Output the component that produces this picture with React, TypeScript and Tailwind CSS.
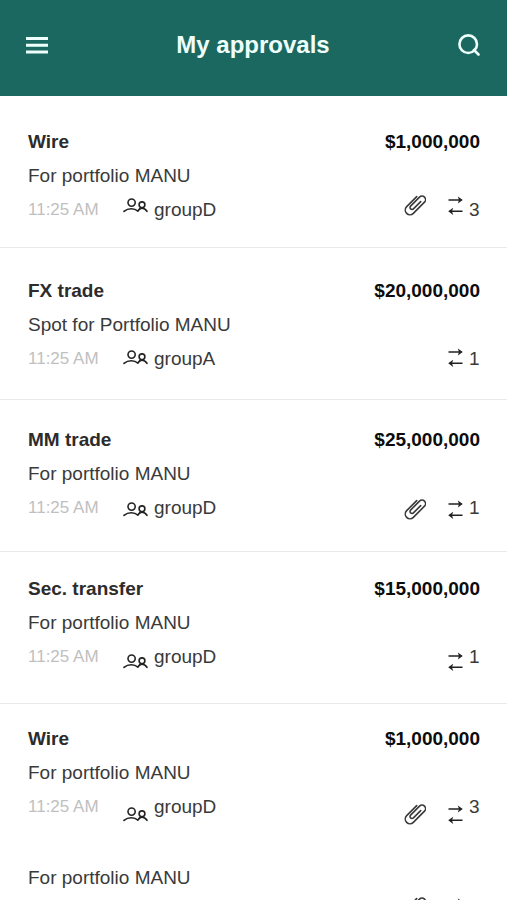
import React from 'react';

interface Approval {
  id: number;
  title?: string;
  amount?: string;
  description: string;
  time?: string;
  group?: string;
  transfers?: number;
  hasAttachment?: boolean;
  rowClass: string;
}

const approvals: Approval[] = [
  {
    id: 1,
    title: 'Wire',
    amount: '$1,000,000',
    description: 'For portfolio MANU',
    time: '11:25 AM',
    group: 'groupD',
    transfers: 3,
    hasAttachment: true,
    rowClass: 'min-h-38 border-b pt-[29px]',
  },
  {
    id: 2,
    title: 'FX trade',
    amount: '$20,000,000',
    description: 'Spot for Portfolio MANU',
    time: '11:25 AM',
    group: 'groupA',
    transfers: 1,
    rowClass: 'min-h-38 border-b pt-[26px]',
  },
  {
    id: 3,
    title: 'MM trade',
    amount: '$25,000,000',
    description: 'For portfolio MANU',
    time: '11:25 AM',
    group: 'groupD',
    transfers: 1,
    hasAttachment: true,
    rowClass: 'min-h-38 border-b pt-[23px]',
  },
  {
    id: 4,
    title: 'Sec. transfer',
    amount: '$15,000,000',
    description: 'For portfolio MANU',
    time: '11:25 AM',
    group: 'groupD',
    transfers: 1,
    rowClass: 'min-h-38 border-b pt-[20px]',
  },
  {
    id: 5,
    title: 'Wire',
    amount: '$1,000,000',
    description: 'For portfolio MANU',
    time: '11:25 AM',
    group: 'groupD',
    transfers: 3,
    hasAttachment: true,
    rowClass: 'min-h-38 pt-[18px]',
  },
  {
    id: 6,
    description: 'For portfolio MANU',
    hasAttachment: true,
    rowClass: 'min-h-[93px] pt-[5px]',
  },
];

const MenuIcon = () => (
  <svg width="22" height="18" viewBox="0 0 22 18" fill="none" stroke="currentColor" strokeWidth="3" aria-hidden="true">
    <path d="M0 2.4h22M0 9.2h22M0 16h22" />
  </svg>
);

const SearchIcon = () => (
  <svg width="22" height="22" viewBox="0 0 22 22" fill="none" stroke="currentColor" strokeWidth="2.6" aria-hidden="true">
    <circle cx="10.2" cy="10.2" r="8.8" />
    <path d="m16 16 4.5 4.5" strokeLinecap="round" />
  </svg>
);

const PeopleIcon = () => (
  <svg width="25" height="21" viewBox="0 0 25 21" fill="none" stroke="currentColor" strokeWidth="1.6" strokeLinecap="round" aria-hidden="true">
    <circle cx="8.6" cy="7.6" r="3.6" />
    <circle cx="19" cy="9.8" r="2.9" />
    <path d="M1 16.4c2-1.700 4.500-2.600 7.300-2.600 2.600 0 4.900.800 6.600 2.300M14.900 16.100c1-1.900 2.400-3 4.100-3 1.900 0 3.700 1.300 5 3.200" />
  </svg>
);

const ClipIcon = () => (
  <svg width="22" height="21" viewBox="0 0 66 63" fill="none" stroke="currentColor" strokeWidth="4.8" strokeLinecap="round" aria-hidden="true">
    <path d="M38 5 8 35A14.1 14.1 0 0 0 28 55L61.5 21.5A10.6 10.6 0 0 0 46.5 6.5L19.75 33.25A6 6 0 0 0 28.25 41.75L50 20" />
  </svg>
);

const TransferIcon = () => (
  <svg width="15" height="21" viewBox="0 0 15 21" fill="none" stroke="currentColor" strokeWidth="1.6" aria-hidden="true">
    <path d="M.5 5H12M14.500 16.300H3" />
    <path d="M9.800 1.400 14.800 5l-5 3.600 1.200-3.600zM5.200 12.700.200 16.300l5 3.600-1.200-3.600z" fill="currentColor" stroke="none" />
  </svg>
);

const ApprovalRow: React.FC<{ approval: Approval }> = ({ approval }) => {
  const { title, amount, description, time, group, transfers, hasAttachment, rowClass } = approval;

  return (
    <li className={`flex flex-col border-[#e9e9e9] pr-[27px] pl-7 text-[19px] leading-[34px] ${rowClass}`}>
      {title && (
        <div className="flex justify-between font-bold">
          <h2 className="text-[#2c2c2c]">{title}</h2>
          <span className="text-[#0c0c0c]">{amount}</span>
        </div>
      )}
      <p>{description}</p>
      <div className="flex flex-1">
        {time && <time className="w-[95px] text-[17px] text-[#c0c0c0]">{time}</time>}
        {group && (
          <>
            <span className="mb-[31px] self-end text-[#222222]">
              <PeopleIcon />
            </span>
            <span className="ml-1.5">{group}</span>
          </>
        )}
        <div className="ml-auto flex">
          {hasAttachment && (
            <span className="mr-[22px] mb-[31px] self-end">
              <ClipIcon />
            </span>
          )}
          <span className="mr-1.5 mb-[31px] self-end text-[#222222]">
            <TransferIcon />
          </span>
          <span className="min-w-[11px]">{transfers}</span>
        </div>
      </div>
    </li>
  );
};

const App: React.FC = () => {
  return (
    <div className="flex h-screen flex-col bg-white font-['Liberation_Sans',Arial,sans-serif] text-[#3a3a3a]">
      <header className="flex h-24 shrink-0 items-center justify-between bg-[#1b6860] pr-[27px] pb-1.5 pl-[26px] text-[#eefffc]">
        <button type="button" aria-label="Open menu">
          <MenuIcon />
        </button>
        <h1 className="text-2xl font-bold">My approvals</h1>
        <button type="button" aria-label="Search approvals">
          <SearchIcon />
        </button>
      </header>
      <main className="min-h-0 flex-1 overflow-y-auto [scrollbar-width:none]">
        <ul>
          {approvals.map((approval) => (
            <ApprovalRow key={approval.id} approval={approval} />
          ))}
        </ul>
      </main>
    </div>
  );
};

export default App;
